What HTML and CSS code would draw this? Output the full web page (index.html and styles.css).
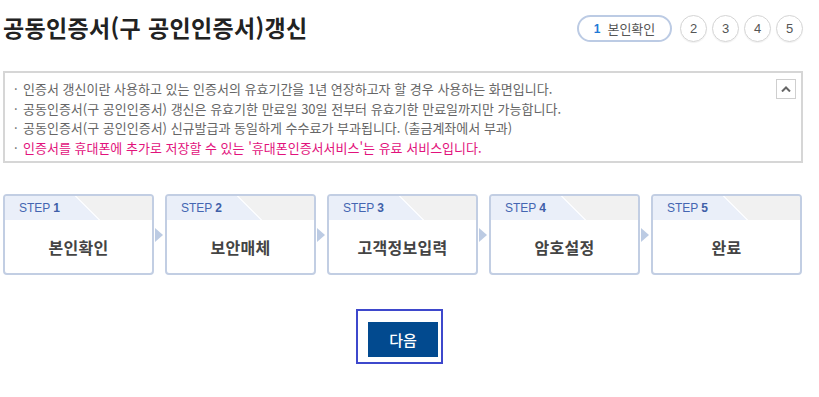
FILE: index.html
```html
<!DOCTYPE html>
<html lang="ko">
<head>
<meta charset="utf-8">
<title>공동인증서 갱신</title>
<link rel="stylesheet" href="styles.css">
</head>
<body>
<div class="page">
  <div class="header">
    <h1 class="title">공동인증서(구 공인인증서)갱신</h1>
    <ol class="progress">
      <li class="pill"><span class="pill-num">1</span><span class="pill-label">본인확인</span></li>
      <li class="dot">2</li>
      <li class="dot">3</li>
      <li class="dot">4</li>
      <li class="dot">5</li>
    </ol>
  </div>

  <div class="info">
    <ul class="info-list">
      <li>인증서 갱신이란 사용하고 있는 인증서의 유효기간을 1년 연장하고자 할 경우 사용하는 화면입니다.</li>
      <li>공동인증서(구 공인인증서) 갱신은 유효기한 만료일 30일 전부터 유효기한 만료일까지만 가능합니다.</li>
      <li>공동인증서(구 공인인증서) 신규발급과 동일하게 수수료가 부과됩니다. (출금계좌에서 부과)</li>
      <li class="pink">인증서를 휴대폰에 추가로 저장할 수 있는 '휴대폰인증서서비스'는 유료 서비스입니다.</li>
    </ul>
    <button class="fold" type="button" aria-label="접기">
      <svg width="10" height="6" viewBox="0 0 10 6"><path d="M1 5.5 L5 1.5 L9 5.5" fill="none" stroke="#666" stroke-width="2"/></svg>
    </button>
  </div>

  <div class="steps">
    <div class="step"><div class="step-head">STEP <b>1</b></div><div class="step-body">본인확인</div></div>
    <div class="step-arrow"></div>
    <div class="step"><div class="step-head">STEP <b>2</b></div><div class="step-body">보안매체</div></div>
    <div class="step-arrow"></div>
    <div class="step"><div class="step-head">STEP <b>3</b></div><div class="step-body">고객정보입력</div></div>
    <div class="step-arrow"></div>
    <div class="step"><div class="step-head">STEP <b>4</b></div><div class="step-body">암호설정</div></div>
    <div class="step-arrow"></div>
    <div class="step"><div class="step-head">STEP <b>5</b></div><div class="step-body">완료</div></div>
  </div>

  <div class="actions">
    <div class="focus-ring"><button class="next" type="button">다음</button></div>
  </div>
</div>
</body>
</html>
```

FILE: styles.css
```css
* { box-sizing: border-box; }
html, body { margin: 0; padding: 0; background: #fff; }
body {
  font-family: "Noto Sans CJK KR", "Noto Sans", sans-serif;
  color: #555;
}
.page {
  width: 803px;
  padding-left: 3px;
}
.header {
  display: flex;
  justify-content: space-between;
  align-items: center;
  margin-top: 15px;
  height: 27px;
}
.title {
  margin: 0 0 2px 0;
  font-size: 23px;
  font-weight: 700;
  letter-spacing: 0.35px;
  line-height: 27px;
  color: #222;
}
.progress {
  list-style: none;
  margin: 0;
  padding: 0;
  display: flex;
  gap: 5px;
}
.pill {
  width: 95px;
  height: 27px;
  margin-right: 3px;
  border: 2px solid #bccbe4;
  border-radius: 14px;
  display: flex;
  align-items: center;
  justify-content: center;
  gap: 7px;
  font-size: 13px;
  color: #555;
}
.pill-num {
  font-family: "Liberation Sans", Arial, sans-serif;
  font-weight: 700;
  color: #1f7ad6;
  font-size: 12px;
}
.dot {
  width: 27px;
  height: 27px;
  border: 1px solid #d4d4d4;
  border-radius: 50%;
  box-shadow: 0 1px 1px rgba(0,0,0,0.06);
  display: flex;
  align-items: center;
  justify-content: center;
  font-family: "Liberation Sans", Arial, sans-serif;
  font-size: 13px;
  color: #555;
}

.info {
  margin-top: 29px;
  width: 800px;
  height: 92px;
  border: 2px solid #d6d6d6;
  display: flex;
  justify-content: space-between;
  align-items: flex-start;
  padding: 6px 5px 0 9px;
}
.info-list {
  list-style: none;
  margin: 0;
  padding: 0;
  font-size: 13px;
  line-height: 19.5px;
  color: #666;
}
.info-list li { position: relative; padding-left: 9px; letter-spacing: 0; }
.info-list li::before {
  content: "·";
  position: absolute;
  left: 0;
  top: 0;
  color: #666;
}
.info-list li.pink { color: #e2127c; }
.fold {
  width: 20px;
  height: 20px;
  margin: 0;
  padding: 0;
  border: 1px solid #cfcfcf;
  background: #fff;
  display: flex;
  align-items: center;
  justify-content: center;
}

.steps {
  margin-top: 31px;
  display: flex;
  align-items: center;
}
.step {
  width: 151px;
  height: 81px;
  border: 2px solid #c2cee3;
  border-radius: 4px;
  overflow: hidden;
  display: flex;
  flex-direction: column;
}
.step-head {
  height: 24px;
  padding-left: 14px;
  display: flex;
  align-items: center;
  gap: 3px;
  font-family: "Liberation Sans", Arial, sans-serif;
  font-size: 12px;
  color: #4466b2;
  background: linear-gradient(45deg, #eaeff9 0, #eaeff9 66px, #fbfcfe 66px, #fbfcfe 67.5px, #f1f1f1 67.5px, #f1f1f1 100%);
}
.step-head b { font-weight: 700; color: #3f5fa8; }
.step-body {
  flex: 1;
  display: flex;
  align-items: center;
  justify-content: center;
  font-size: 16px;
  font-weight: 700;
  color: #444;
  letter-spacing: 0.3px;
}
.step-arrow {
  width: 11px;
  height: 14px;
  display: flex;
}
.step-arrow::before {
  content: "";
  width: 0;
  height: 0;
  border-top: 7px solid transparent;
  border-bottom: 7px solid transparent;
  border-left: 8px solid #bccbe3;
  margin-left: 1px;
}

.actions {
  margin-top: 34px;
  width: 800px;
  display: flex;
  justify-content: center;
}
.focus-ring {
  border: 2px solid #3e48cc;
  padding: 11px 3px 5px 10px;
  margin-right: 7px;
}
.next {
  display: block;
  width: 70px;
  height: 35px;
  border: 0;
  margin: 0;
  padding: 0;
  background: #024a8f;
  color: #fff;
  font-family: "Noto Sans CJK KR", sans-serif;
  font-size: 15px;
  font-weight: 500;
}
```
